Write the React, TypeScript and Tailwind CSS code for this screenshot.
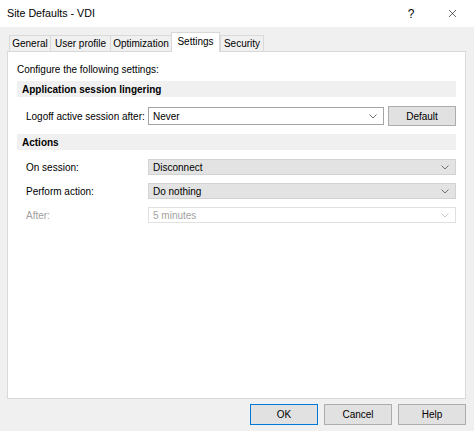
import { X } from "lucide-react";

function Chevron({ light }: { light?: boolean }) {
	return (
		<svg width="8" height="5" viewBox="0 0 8 5" className={light ? "text-[#c8c8c8]" : "text-[#707070]"}>
			<path d="M0.5 0.5l3.5 3.5L7.5 0.5" fill="none" stroke="currentColor" strokeWidth="1" />
		</svg>
	);
}

function Select({ value, variant }: { value: string; variant: "white" | "gray" | "disabled" }) {
	const box =
		variant === "white"
			? "h-[18px] bg-white border-[#a5a5a5] text-black"
			: variant === "gray"
				? "h-[16px] bg-[#e3e3e3] border-[#d2d2d2] text-black"
				: "h-[16px] bg-white border-[#e0e0e0] text-[#a3a3a3]";
	return (
		<div className={`flex flex-1 items-center justify-between border pl-[4px] pr-[6px] ${box}`}>
			<span>{value}</span>
			<Chevron light={variant === "disabled"} />
		</div>
	);
}

function SectionHeader({ children }: { children: string }) {
	return <div className="flex items-center h-[16px] bg-[#f0f0f0] pl-[5px] font-bold">{children}</div>;
}

function Row({ label, disabled, children }: { label: string; disabled?: boolean; children: React.ReactNode }) {
	return (
		<div className="flex items-center">
			<span className={`w-[131px] pl-[9px] shrink-0 ${disabled ? "text-[#a0a0a0]" : ""}`}>{label}</span>
			{children}
		</div>
	);
}

const tabs = [
	{ name: "General", w: "w-[42px]" },
	{ name: "User profile", w: "w-[61px]" },
	{ name: "Optimization", w: "w-[62px]" },
	{ name: "Settings", w: "w-[49px]" },
	{ name: "Security", w: "w-[44px]" },
];

export default function App() {
	return (
		<div
			className="w-[474px] h-[431px] bg-[#f0f0f0] text-[10px] text-black flex flex-col overflow-hidden"
			style={{ fontFamily: '"Liberation Sans", Arial, sans-serif' }}
		>
			{/* title bar */}
			<div className="flex items-center justify-between h-[27px] bg-white pl-[7px] pr-[7px] shrink-0">
				<span className="text-[10.7px]">Site Defaults - VDI</span>
				<div className="flex items-center gap-[11px]">
					<span className="w-[30px] text-center text-[12px]">?</span>
					<span className="w-[30px] flex justify-center">
						<X size={13} strokeWidth={1.1} />
					</span>
				</div>
			</div>

			{/* tabs */}
			<div className="flex items-end pl-[9px] h-[25px] shrink-0 -mb-px relative z-10">
				{tabs.map((t) =>
					t.name === "Settings" ? (
						<div
							key={t.name}
							className={`${t.w} flex items-center justify-center h-[20px] pb-[2px] bg-white border border-b-0 border-[#d9d9d9]`}
						>
							{t.name}
						</div>
					) : (
						<div
							key={t.name}
							className={`${t.w} flex items-center justify-center h-[16px] mb-px bg-[#f0f0f0] border border-b-0 border-[#d9d9d9] -mr-px`}
						>
							{t.name}
						</div>
					),
				)}
			</div>

			{/* panel */}
			<div className="ml-[7px] w-[459px] h-[348px] shrink-0 bg-white border border-[#d9d9d9] pl-[9px] pr-[9px] pt-[9px]">
				<div className="h-[16px] flex items-center">Configure the following settings:</div>
				<div className="mt-[4px]">
					<SectionHeader>Application session lingering</SectionHeader>
				</div>
				<div className="mt-[9px]">
					<Row label="Logoff active session after:">
						<div className="flex flex-1 items-center gap-[4px]">
							<Select value="Never" variant="white" />
							<button className="w-[68px] h-[20px] bg-[#e1e1e1] border border-[#adadad]">Default</button>
						</div>
					</Row>
				</div>
				<div className="mt-[8px]">
					<SectionHeader>Actions</SectionHeader>
				</div>
				<div className="flex flex-col gap-[8px] mt-[9px]">
					<Row label="On session:">
						<Select value="Disconnect" variant="gray" />
					</Row>
					<Row label="Perform action:">
						<Select value="Do nothing" variant="gray" />
					</Row>
					<Row label="After:" disabled>
						<Select value="5 minutes" variant="disabled" />
					</Row>
				</div>
			</div>

			{/* footer */}
			<div className="flex justify-end gap-[6px] pr-[8px] pt-[5px]">
				<button className="w-[68px] h-[21px] bg-[#e1e1e1] border border-[#0078d7]">OK</button>
				<button className="w-[68px] h-[21px] bg-[#e1e1e1] border border-[#adadad]">Cancel</button>
				<button className="w-[68px] h-[21px] bg-[#e1e1e1] border border-[#adadad]">Help</button>
			</div>
		</div>
	);
}
